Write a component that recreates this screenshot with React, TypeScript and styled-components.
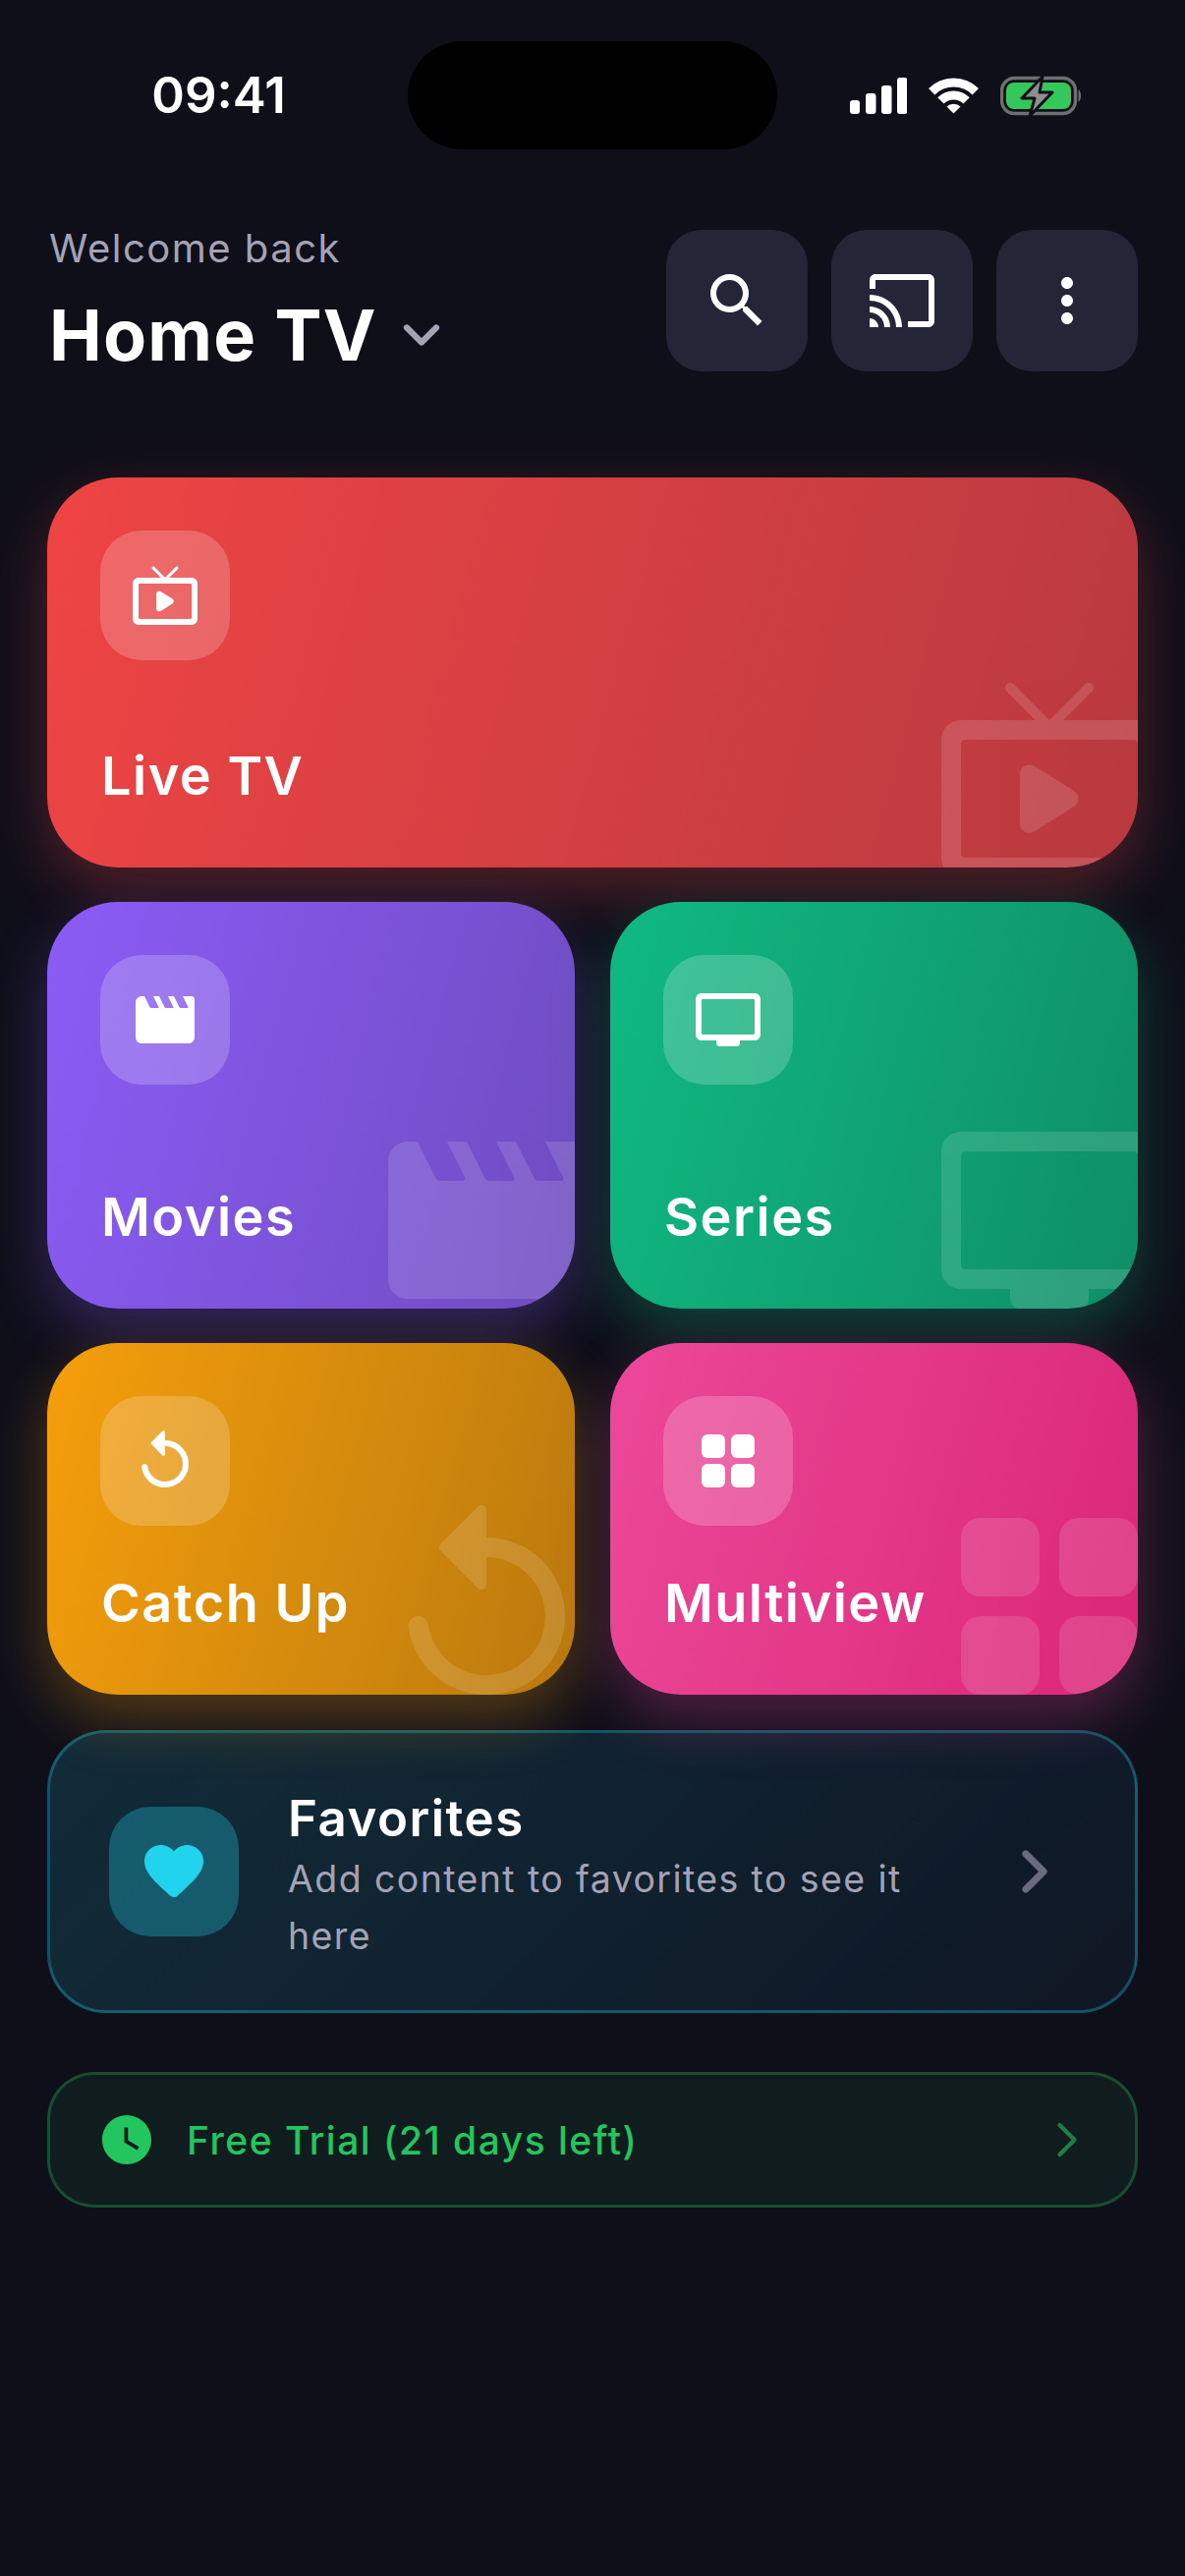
import styled, { createGlobalStyle } from 'styled-components';
import type { ReactNode } from 'react';

const GlobalStyle = createGlobalStyle`
  html, body {
    margin: 0;
    padding: 0;
    background: #0f0f1a;
  }
  * {
    box-sizing: border-box;
  }
`;

const icons: Record<string, ReactNode> = {
  live: (
    <path d="M21 6h-7.59l2.94-2.94c.2-.2.2-.51 0-.71s-.51-.2-.71 0L12 5.99 8.36 2.35c-.2-.2-.51-.2-.71 0s-.2.51 0 .71L10.59 6H3c-1.1 0-2 .89-2 2v12c0 1.1.9 2 2 2h18c1.1 0 2-.9 2-2V8c0-1.1-.9-2-2-2zm-.4 14H3.4c-.22 0-.4-.18-.4-.4V8.4c0-.22.18-.4.4-.4h17.2c.22 0 .4.18.4.4v11.2c0 .22-.18.4-.4.4zM9 11.5c0-.8.8-1.2 1.5-.8l4 2.5c.6.4.6 1.2 0 1.6l-4 2.5c-.7.4-1.5 0-1.5-.8z" />
  ),
  movie: (
    <path d="M18 4l1.82 3.64c.08.16-.04.36-.22.36h-2.29c-.19 0-.36-.11-.45-.28L15 4h-2l1.82 3.64c.08.16-.04.36-.22.36h-2.29c-.19 0-.36-.11-.45-.28L10 4H8l1.82 3.64c.08.16-.04.36-.22.36H7.31c-.19 0-.36-.11-.45-.28L5 4H4c-1.1 0-1.99.9-1.99 2L2 18c0 1.1.9 2 2 2h16c1.1 0 2-.9 2-2V5c0-.55-.45-1-1-1h-3z" />
  ),
  tv: (
    <path d="M21 3H3c-1.1 0-2 .9-2 2v12c0 1.1.9 2 2 2h5v1c0 .55.45 1 1 1h6c.55 0 1-.45 1-1v-1h5c1.1 0 2-.9 2-2V5c0-1.1-.9-2-2-2zm-.4 14H3.4c-.22 0-.4-.18-.4-.4V5.4c0-.22.18-.4.4-.4h17.2c.22 0 .4.18.4.4v11.2c0 .22-.18.4-.4.4z" />
  ),
  replay: (
    <path d="M12 5V2.21c0-.45-.54-.67-.85-.35L7.35 5.65c-.2.2-.2.51 0 .71l3.79 3.79c.32.31.86.09.86-.36V7c3.73 0 6.68 3.42 5.86 7.29-.47 2.27-2.31 4.1-4.57 4.57-3.57.75-6.75-1.7-7.23-5.01-.07-.48-.49-.85-.98-.85-.6 0-1.08.53-1 1.13.62 4.39 4.8 7.64 9.53 6.72 3.12-.61 5.63-3.12 6.24-6.24C20.84 9.48 16.94 5 12 5z" />
  ),
  grid: (
    <>
      <rect x="3" y="3" width="8" height="8" rx="2" />
      <rect x="13" y="3" width="8" height="8" rx="2" />
      <rect x="3" y="13" width="8" height="8" rx="2" />
      <rect x="13" y="13" width="8" height="8" rx="2" />
    </>
  ),
};

const cards = [
  { key: 'live', label: 'Live TV', from: '#ef4444', to: '#b83a40', glow: '239, 68, 68', area: 'live' },
  { key: 'movie', label: 'Movies', from: '#8b5cf6', to: '#6f4cc0', glow: '139, 92, 246', area: 'movies' },
  { key: 'tv', label: 'Series', from: '#10b981', to: '#0f8f66', glow: '16, 185, 129', area: 'series' },
  { key: 'replay', label: 'Catch Up', from: '#f59e0b', to: '#ba7a0e', glow: '245, 158, 11', area: 'catch' },
  { key: 'grid', label: 'Multiview', from: '#ec4899', to: '#db2777', glow: '236, 72, 153', area: 'multi' },
];

export default function App() {
  return (
    <Screen>
      <GlobalStyle />
      <StatusBar>
        <Clock>09:41</Clock>
        <Island />
        <StatusIcons>
          <svg width="58" height="37" viewBox="0 0 58 37" fill="#fff">
            <rect x="0" y="23" width="10" height="14" rx="3" />
            <rect x="16" y="16" width="10.5" height="21" rx="3" />
            <rect x="32" y="8" width="10.5" height="29" rx="3" />
            <rect x="48" y="0" width="10.5" height="37" rx="3" />
          </svg>
          <svg width="51" height="37" viewBox="0 0 51 37" fill="none" stroke="#fff" strokeWidth="9">
            <path d="M3.2 14.2a31.5 31.5 0 0 1 44.6 0" />
            <path d="M12.4 23.4a18.5 18.5 0 0 1 26.2 0" />
            <path d="M18.5 29.5a10 10 0 0 1 14 0l-7 7z" fill="#fff" stroke="none" />
          </svg>
          <svg width="82" height="43" viewBox="0 0 82 43" fill="none">
            <rect x="1.5" y="3.5" width="75" height="36" rx="13" stroke="#6e6e73" strokeWidth="3.4" />
            <rect x="6" y="8" width="66" height="27" rx="8" fill="#34c759" />
            <path d="M79.5 15c1.5 1 2.5 3.5 2.5 6.5s-1 5.5-2.5 6.5z" fill="#6e6e73" />
            <path d="M43 2L22 24h13l-5 18 23-24H40z" fill="#8e8e93" stroke="#0f0f1a" strokeWidth="3" strokeLinejoin="round" />
          </svg>
        </StatusIcons>
      </StatusBar>

      <Header>
        <Greeting>
          <Welcome>Welcome back</Welcome>
          <ProfileRow>
            <ProfileName>Home TV</ProfileName>
            <svg width="60" height="60" viewBox="0 0 24 24" fill="none" stroke="#a3a3b5" strokeWidth="2.5" strokeLinecap="round" strokeLinejoin="round">
              <path d="M6 9l6 6 6-6" />
            </svg>
          </ProfileRow>
        </Greeting>
        <Actions>
          <ActionButton>
            <svg width="72" height="72" viewBox="0 0 24 24" fill="#fff">
              <path d="M15.5 14h-.79l-.28-.27A6.47 6.47 0 0 0 16 9.5 6.5 6.5 0 1 0 9.5 16c1.61 0 3.09-.59 4.23-1.57l.27.28v.79l5 4.99L20.49 19l-4.99-5zm-6 0C7.01 14 5 11.99 5 9.5S7.01 5 9.5 5 14 7.01 14 9.5 11.99 14 9.5 14z" />
            </svg>
          </ActionButton>
          <ActionButton>
            <svg width="72" height="72" viewBox="0 0 24 24" fill="#fff">
              <path d="M21 3H3c-1.1 0-2 .9-2 2v3h2V5h18v14h-7v2h7c1.1 0 2-.9 2-2V5c0-1.1-.9-2-2-2zM1 18v3h3c0-1.66-1.34-3-3-3zm0-4v2c2.76 0 5 2.24 5 5h2c0-3.87-3.13-7-7-7zm0-4v2c4.97 0 9 4.03 9 9h2c0-6.08-4.93-11-11-11z" />
            </svg>
          </ActionButton>
          <ActionButton>
            <svg width="72" height="72" viewBox="0 0 24 24" fill="#fff">
              <path d="M12 8c1.1 0 2-.9 2-2s-.9-2-2-2-2 .9-2 2 .9 2 2 2zm0 2c-1.1 0-2 .9-2 2s.9 2 2 2 2-.9 2-2-.9-2-2-2zm0 6c-1.1 0-2 .9-2 2s.9 2 2 2 2-.9 2-2-.9-2-2-2z" />
            </svg>
          </ActionButton>
        </Actions>
      </Header>

      <Content>
        <CardGrid>
          {cards.map((card) => (
            <Card key={card.key} $area={card.area} $from={card.from} $to={card.to} $glow={card.glow}>
              <IconBox>
                <svg width="72" height="72" viewBox="0 0 24 24" fill="#fff">
                  {icons[card.key]}
                </svg>
              </IconBox>
              <CardLabel>{card.label}</CardLabel>
              <CardDecor width="240" height="240" viewBox="0 0 24 24" fill="#fff">
                {icons[card.key]}
              </CardDecor>
            </Card>
          ))}
        </CardGrid>

        <FavoritesCard>
          <FavoritesIcon>
            <svg width="72" height="72" viewBox="0 0 24 24" fill="#22d3ee">
              <path d="M13.35 20.13c-.76.69-1.93.69-2.69-.01l-.11-.1C5.3 15.27 1.87 12.16 2 8.28c.06-1.7.93-3.33 2.34-4.29 2.64-1.8 5.9-.96 7.66 1.1 1.76-2.06 5.02-2.91 7.66-1.1 1.41.96 2.28 2.59 2.34 4.29.14 3.88-3.3 6.99-8.55 11.76l-.1.09z" />
            </svg>
          </FavoritesIcon>
          <FavoritesText>
            <FavoritesTitle>Favorites</FavoritesTitle>
            <FavoritesHint>Add content to favorites to see it here</FavoritesHint>
          </FavoritesText>
          <svg width="72" height="72" viewBox="0 0 24 24" fill="none" stroke="#6b6b80" strokeWidth="2.4" strokeLinecap="round" strokeLinejoin="round">
            <path d="M9 6l6 6-6 6" />
          </svg>
        </FavoritesCard>

        <TrialBar>
          <svg width="60" height="60" viewBox="0 0 24 24" fill="#22c55e">
            <path d="M12 2C6.5 2 2 6.5 2 12s4.5 10 10 10 10-4.5 10-10S17.5 2 12 2zm4.2 14.2L11 13V7h1.5v5.2l4.5 2.7-.8 1.3z" />
          </svg>
          <TrialText>Free Trial (21 days left)</TrialText>
          <svg width="60" height="60" viewBox="0 0 24 24" fill="none" stroke="#1c7f46" strokeWidth="1.7" strokeLinecap="round" strokeLinejoin="round">
            <path d="M9 6l6 6-6 6" />
          </svg>
        </TrialBar>
      </Content>
    </Screen>
  );
}

const Screen = styled.div`
  width: 1206px;
  height: 2622px;
  overflow: hidden;
  background: #0f0f1a;
  font-family: Inter, 'Liberation Sans', sans-serif;
  color: #fff;
`;

const StatusBar = styled.div`
  display: grid;
  grid-template-columns: 415px 376px 1fr;
  align-items: center;
  padding-top: 42px;
`;

const Clock = styled.div`
  padding-left: 30px;
  text-align: center;
  font-size: 51px;
  font-weight: 600;
  line-height: 60px;
`;

const Island = styled.div`
  height: 110px;
  border-radius: 55px;
  background: #000;
`;

const StatusIcons = styled.div`
  display: flex;
  align-items: center;
  gap: 22px;
  padding-left: 74px;
`;

const Header = styled.header`
  display: flex;
  align-items: center;
  justify-content: space-between;
  margin-top: 76px;
  padding: 0 48px 0 50px;
`;

const Greeting = styled.div`
  display: flex;
  flex-direction: column;
  gap: 20px;
`;

const Welcome = styled.div`
  font-size: 40px;
  line-height: 50px;
  letter-spacing: 1.5px;
  color: #a3a3b5;
`;

const ProfileRow = styled.div`
  display: flex;
  align-items: center;
  gap: 15px;
`;

const ProfileName = styled.h1`
  margin: 0;
  font-size: 72px;
  font-weight: 700;
  line-height: 86px;
  letter-spacing: 1.2px;
`;

const Actions = styled.div`
  display: flex;
  gap: 24px;
`;

const ActionButton = styled.div`
  display: flex;
  align-items: center;
  justify-content: center;
  width: 144px;
  height: 144px;
  border-radius: 36px;
  background: #252538;
`;

const Content = styled.main`
  display: flex;
  flex-direction: column;
  margin-top: 102px;
  padding: 0 48px;
`;

const CardGrid = styled.div`
  display: grid;
  grid-template-columns: 537px 537px;
  grid-template-rows: 397px 414px 358px;
  grid-template-areas:
    'live live'
    'movies series'
    'catch multi';
  gap: 35px 36px;
`;

const Card = styled.div<{ $area: string; $from: string; $to: string; $glow: string }>`
  grid-area: ${(p) => p.$area};
  position: relative;
  display: flex;
  flex-direction: column;
  justify-content: space-between;
  padding: 54px 54px 61px 55px;
  overflow: hidden;
  border-radius: 72px;
  background: linear-gradient(105deg, ${(p) => p.$from}, ${(p) => p.$to});
  box-shadow: 0 24px 60px rgba(${(p) => p.$glow}, 0.3);
`;

const IconBox = styled.div`
  display: flex;
  align-items: center;
  justify-content: center;
  width: 132px;
  height: 132px;
  margin-left: -1px;
  border-radius: 42px;
  background: rgba(255, 255, 255, 0.2);
`;

const CardLabel = styled.div`
  position: relative;
  z-index: 1;
  font-size: 54px;
  font-weight: 600;
  line-height: 65px;
  letter-spacing: 1.5px;
`;

const CardDecor = styled.svg`
  position: absolute;
  right: -30px;
  bottom: -30px;
  opacity: 0.13;
`;

const FavoritesCard = styled.div`
  display: flex;
  align-items: center;
  height: 288px;
  margin-top: 36px;
  padding: 0 66px 0 60px;
  border: 3px solid rgba(34, 211, 238, 0.3);
  border-radius: 60px;
  background: linear-gradient(135deg, rgba(34, 211, 238, 0.15), rgba(34, 170, 238, 0.05));
`;

const FavoritesIcon = styled.div`
  display: flex;
  flex-shrink: 0;
  align-items: center;
  justify-content: center;
  width: 132px;
  height: 132px;
  border-radius: 42px;
  background: rgba(34, 211, 238, 0.3);
`;

const FavoritesText = styled.div`
  flex: 1;
  margin: 0 42px 0 50px;
  padding-top: 10px;
`;

const FavoritesTitle = styled.div`
  font-size: 51px;
  font-weight: 600;
  line-height: 61px;
  letter-spacing: 1.5px;
`;

const FavoritesHint = styled.div`
  margin-top: 3px;
  font-size: 37.5px;
  line-height: 58px;
  letter-spacing: 1.4px;
  color: #a3a3b5;
`;

const TrialBar = styled.div`
  display: flex;
  align-items: center;
  height: 138px;
  margin-top: 60px;
  padding: 0 39px 0 48px;
  border: 3px solid rgba(34, 197, 94, 0.3);
  border-radius: 48px;
  background: rgba(34, 197, 94, 0.08);
`;

const TrialText = styled.div`
  flex: 1;
  margin-left: 31px;
  font-size: 39px;
  font-weight: 500;
  letter-spacing: 1.5px;
  color: #22c55e;
`;
